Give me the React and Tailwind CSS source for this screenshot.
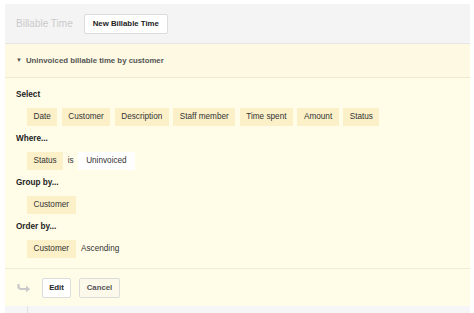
const Chip = ({ children }) => (
  <span className="h-[18px] px-[6.5px] flex items-center bg-[#fcf0c9] text-[#333]">{children}</span>
);

const Section = ({ label, children }) => (
  <div className="flex flex-col">
    <div className="h-[14px] flex items-center font-bold text-[#222]">{label}</div>
    <div className="mt-[6px] mb-[6px] pl-[11px] flex items-center gap-[4.5px] h-[18px]">{children}</div>
  </div>
);

export default function App() {
  return (
    <div className="w-[474px] h-[313px] bg-white overflow-hidden pt-[4px] pl-[5px] pr-[4px] text-[8.2px]" style={{ fontFamily: '"Liberation Sans", Arial, sans-serif' }}>
      <div className="bg-[#fffce8] w-[465px]">
        {/* header */}
        <div className="h-[40px] bg-[#f4f4f5] border-b border-[#e6e6e6] flex items-center pl-[11px] gap-[11px]">
          <span className="text-[10px] text-[#cacaca]">Billable Time</span>
          <button className="h-[20px] px-[8px] bg-white border border-[#dcdcdc] rounded-[2px] text-[#222] font-bold text-[7.8px]">
            New Billable Time
          </button>
        </div>

        {/* title bar */}
        <div className="h-[34px] bg-[#fdf9e2] border-b border-[#efead2] flex items-center pl-[11px] gap-[4px] font-bold text-[#555] text-[7.8px]">
          <span className="text-[6px]">▼</span>
          <span>Uninvoiced billable time by customer</span>
        </div>

        {/* query */}
        <div className="px-[11px] pt-[10px] pb-[4px]">
          <Section label="Select">
            <Chip>Date</Chip>
            <Chip>Customer</Chip>
            <Chip>Description</Chip>
            <Chip>Staff member</Chip>
            <Chip>Time spent</Chip>
            <Chip>Amount</Chip>
            <Chip>Status</Chip>
          </Section>
          <Section label="Where...">
            <Chip>Status</Chip>
            <span className="text-[#333]">is</span>
            <span className="h-[18px] px-[8px] flex items-center bg-white text-[#333]">Uninvoiced</span>
          </Section>
          <Section label="Group by...">
            <Chip>Customer</Chip>
          </Section>
          <Section label="Order by...">
            <Chip>Customer</Chip>
            <span className="px-[1px] text-[#333]">Ascending</span>
          </Section>
        </div>

        {/* footer */}
        <div className="h-[38px] border-t border-[#f0ebd5] flex items-center pl-[12px] gap-[8px]">
          <svg width="14" height="10" viewBox="0 0 14 10" className="mr-[3px]">
            <path d="M1.5 1v2.5a2.5 2.5 0 0 0 2.5 2.5h6" fill="none" stroke="#c9c9c9" strokeWidth="2.2" />
            <path d="M9 2.5l4 3.5-4 3.5z" fill="#c9c9c9" />
          </svg>
          <button className="h-[20px] w-[29px] bg-white border border-[#dcdcdc] rounded-[2px] text-[#222] font-bold text-[7.8px]">
            Edit
          </button>
          <button className="h-[20px] w-[41px] bg-[#fdf9ea] border border-[#dcdcdc] rounded-[2px] text-[#555] font-bold text-[7.8px]">
            Cancel
          </button>
        </div>
      </div>
      <div className="h-[10px] w-[465px] bg-[#f6f6f8] flex">
        <div className="ml-[22px] w-px h-full bg-[#e0e0e4]" />
      </div>
    </div>
  );
}
